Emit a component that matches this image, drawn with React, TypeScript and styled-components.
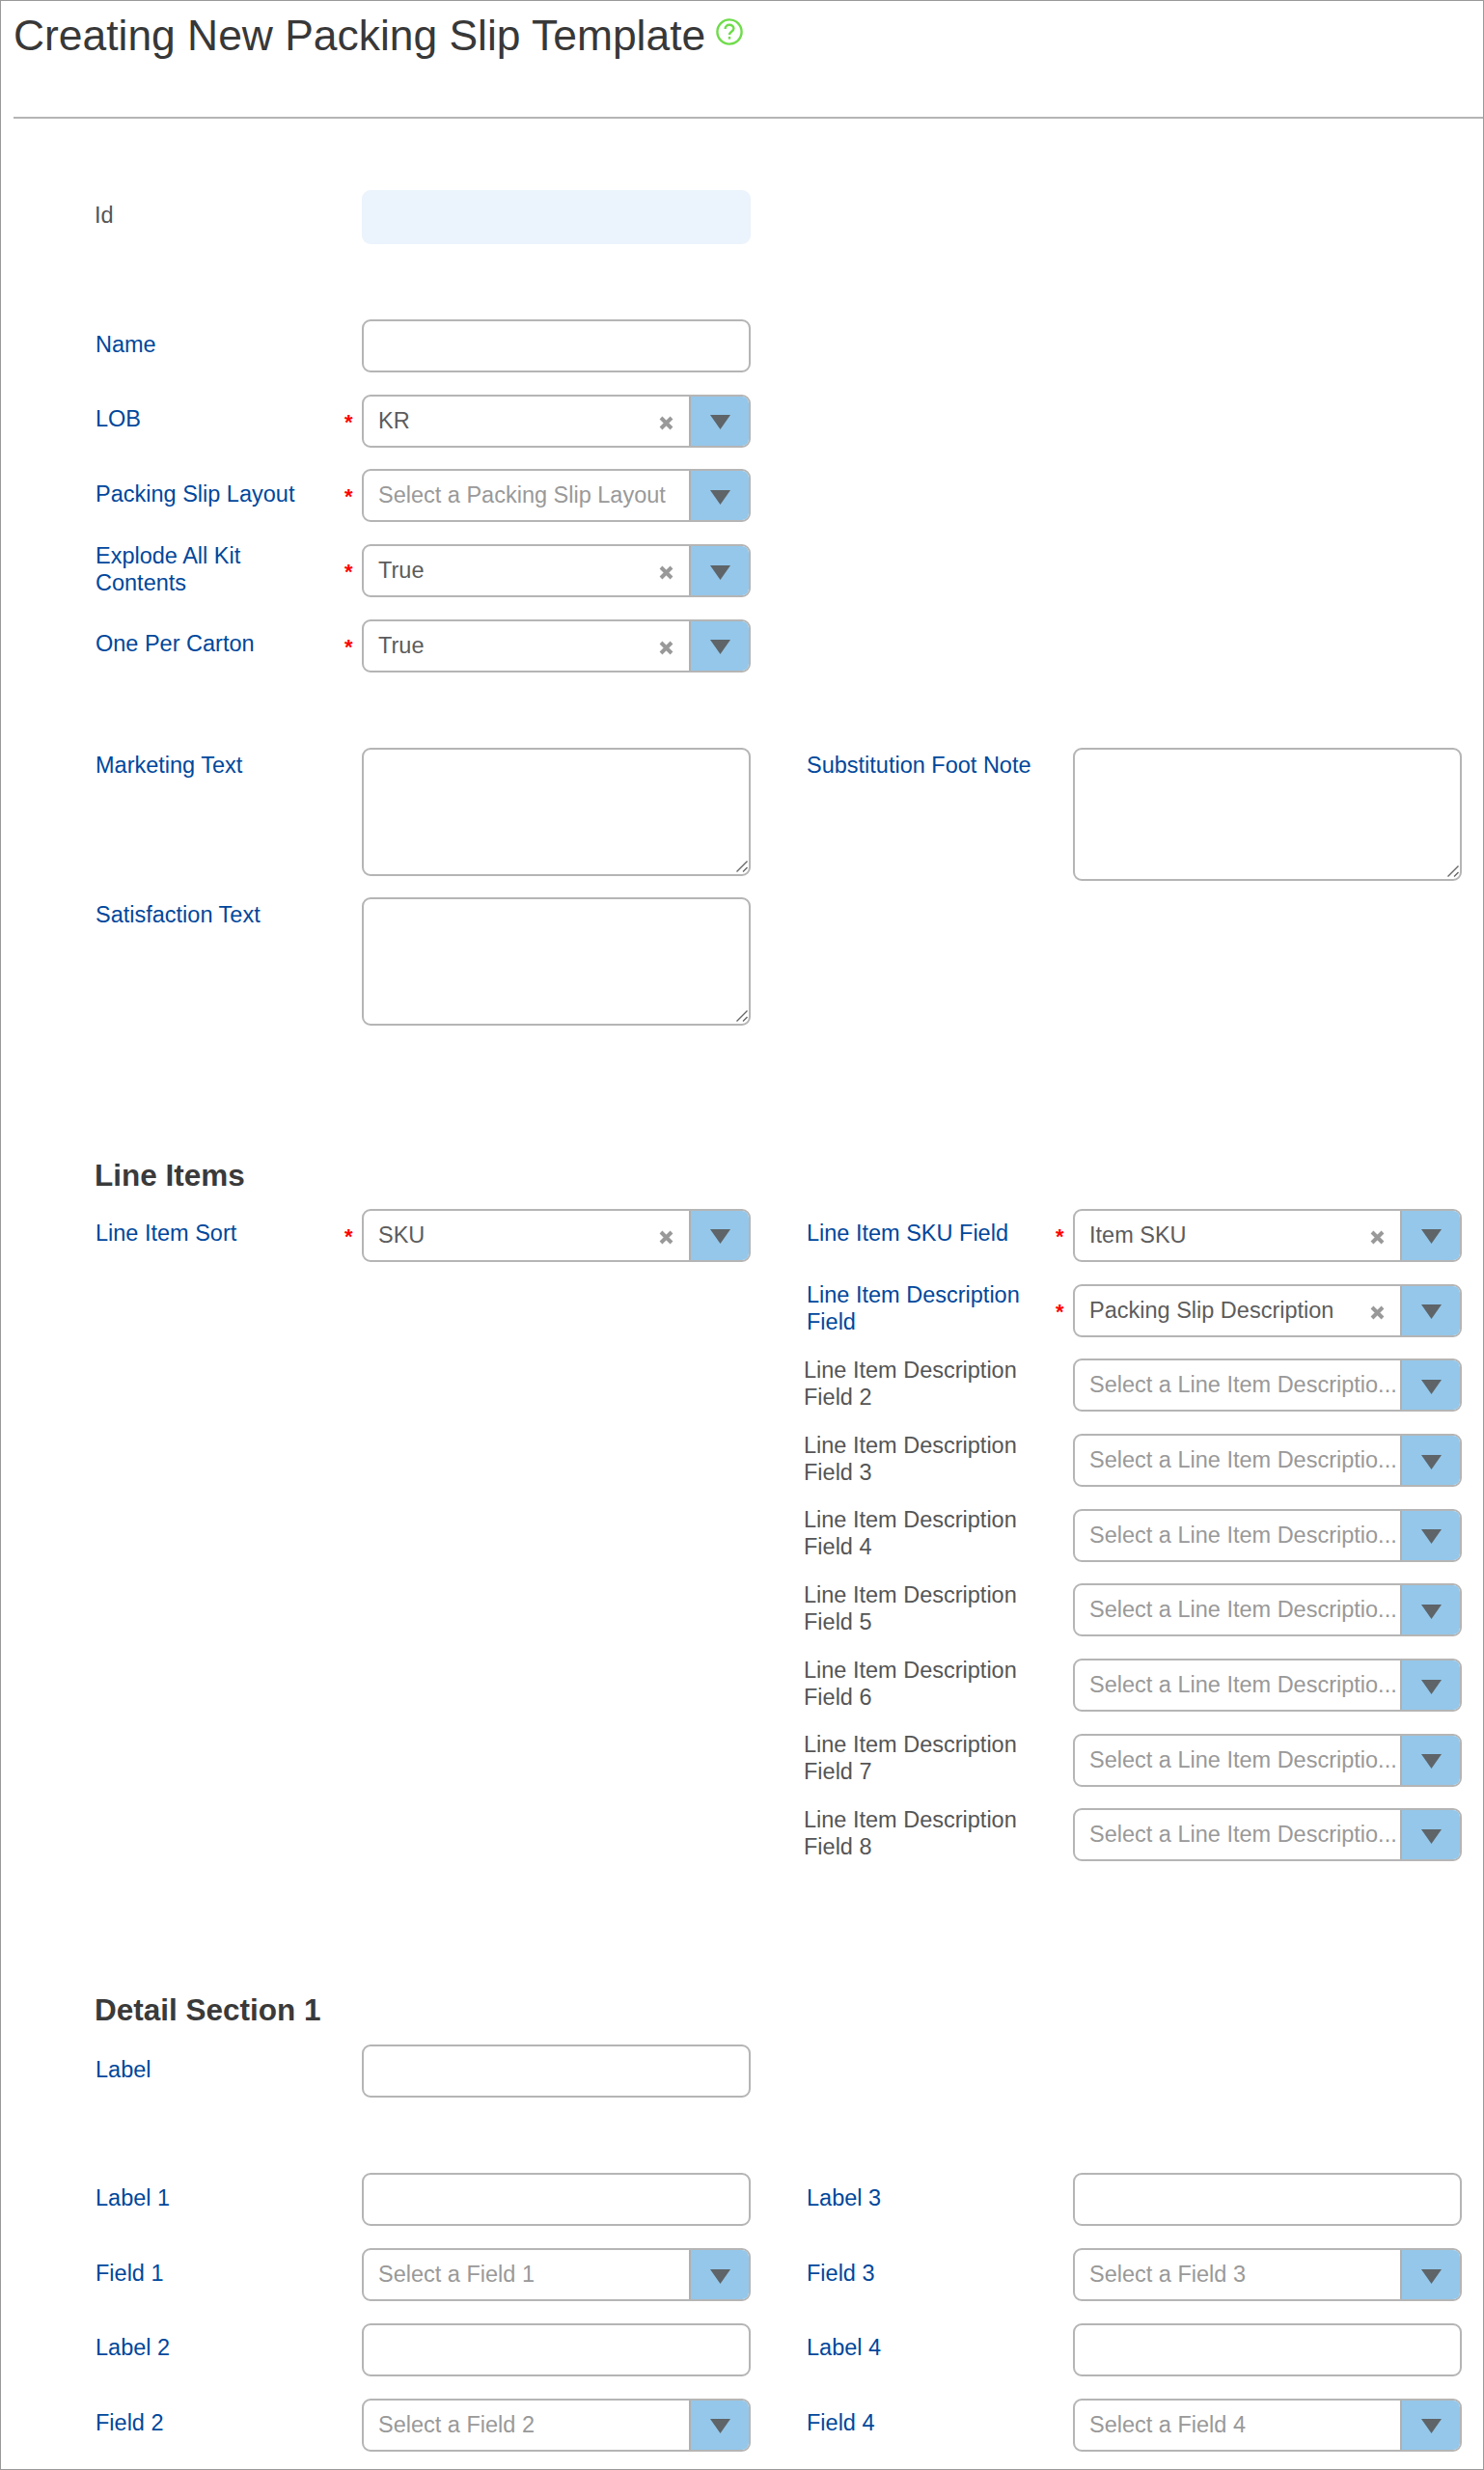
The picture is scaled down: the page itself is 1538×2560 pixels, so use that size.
import React from 'react'
import styled, { createGlobalStyle } from 'styled-components'

const GlobalStyle = createGlobalStyle`
  html, body {
    margin: 0;
    padding: 0;
    background: #fff;
  }
  * {
    box-sizing: border-box;
  }
`

const Page = styled.div`
  width: 1538px;
  height: 2560px;
  overflow: hidden;
  border: 1px solid #999;
  font-family: 'Liberation Sans', Arial, sans-serif;
  color: #555;
`

const Header = styled.div`
  margin-left: 13px;
  height: 120px;
  border-bottom: 2px solid #b5b5b5;
  box-sizing: content-box;
  display: flex;
  align-items: flex-start;
`

const Title = styled.h1`
  margin: 12px 0 0;
  font-size: 44.4px;
  line-height: 48px;
  font-weight: 400;
  color: #383838;
`

const HelpIcon = styled.svg`
  width: 28px;
  height: 28px;
  margin: 18px 0 0 11px;
`

const Form = styled.div`
  padding-left: 97px;
  width: 1514px;
`

const Columns = styled.div<{ $top: number }>`
  display: flex;
  gap: 57px;
  margin-top: ${({ $top }) => $top}px;
`

const Column = styled.div`
  width: 680px;
  display: flex;
  flex-direction: column;
  gap: 22.7px;
`

const Field = styled.div`
  display: grid;
  grid-template-columns: 277px 403px;
  position: relative;
`

const FieldLabel = styled.div<{ $muted?: boolean; $top?: boolean; $outdent?: boolean }>`
  width: 240px;
  font-size: 23.5px;
  line-height: 28px;
  padding-left: ${({ $muted }) => ($muted ? '0' : '1px')};
  margin-left: ${({ $outdent }) => ($outdent ? '-2px' : '0')};
  align-self: ${({ $top }) => ($top ? 'start' : 'center')};
  margin-top: ${({ $top }) => ($top ? '4px' : '-4px')};
  color: ${({ $muted }) => ($muted ? '#555' : '#00479b')};
`

const Required = styled.span`
  position: absolute;
  left: 259px;
  top: 15px;
  font-size: 22px;
  line-height: 28px;
  font-weight: 700;
  color: #f00;
`

const Input = styled.input<{ $readOnlyLook?: boolean }>`
  width: 403px;
  height: ${({ $readOnlyLook }) => ($readOnlyLook ? '56px' : '55px')};
  padding: 0 15px;
  font: inherit;
  border-radius: 9px;
  outline: none;
  background: ${({ $readOnlyLook }) => ($readOnlyLook ? '#ebf3fc' : '#fff')};
  border: ${({ $readOnlyLook }) => ($readOnlyLook ? '0' : '2px solid #b5b5b5')};
`

const TextAreaWrap = styled.div`
  position: relative;
  width: 403px;
`

const TextArea = styled.textarea<{ $height: number }>`
  display: block;
  width: 403px;
  height: ${({ $height }) => $height}px;
  border: 2px solid #b5b5b5;
  border-radius: 9px;
  outline: none;
  resize: none;
  background: #fff;
`

const ResizeGrip = styled.svg`
  position: absolute;
  right: 3px;
  bottom: 4px;
  width: 12px;
  height: 12px;
`

const SelectBox = styled.div`
  width: 403px;
  height: 55px;
  display: flex;
  border: 2px solid #b5b5b5;
  border-radius: 9px;
  overflow: hidden;
  background: #fff;
`

const SelectValue = styled.div<{ $placeholder: boolean }>`
  flex: 1;
  min-width: 0;
  padding-left: 15px;
  font-size: 23.5px;
  line-height: 50px;
  white-space: nowrap;
  overflow: hidden;
  color: ${({ $placeholder }) => ($placeholder ? '#999' : '#5c5c5c')};
`

const ClearIcon = styled.svg`
  flex: none;
  width: 15px;
  height: 15px;
  margin: 20px 16px 0 0;
`

const CaretButton = styled.div`
  flex: none;
  width: 62px;
  display: flex;
  align-items: center;
  justify-content: center;
  background: #94c7ea;
  border-left: 2px solid #b0b0b0;
`

const CaretIcon = styled.svg`
  width: 21px;
  height: 15px;
  margin-top: 3px;
`

const SectionTitle = styled.h2<{ $top: number }>`
  margin: ${({ $top }) => $top}px 0 0;
  font-size: 31.5px;
  line-height: 34px;
  font-weight: 700;
  color: #3a3a3a;
`

interface SelectProps {
  value?: string
  placeholder?: string
}

function Select({ value, placeholder }: SelectProps) {
  return (
    <SelectBox>
      <SelectValue $placeholder={!value}>{value || placeholder}</SelectValue>
      {value && (
        <ClearIcon viewBox="0 0 15 15">
          <path d="M2 2 L13 13 M13 2 L2 13" stroke="#999" strokeWidth="4" />
        </ClearIcon>
      )}
      <CaretButton>
        <CaretIcon viewBox="0 0 21 15">
          <path d="M0 0 H21 L10.5 15 Z" fill="#5e6468" />
        </CaretIcon>
      </CaretButton>
    </SelectBox>
  )
}

interface SelectFieldProps extends SelectProps {
  label: string
  required?: boolean
  muted?: boolean
}

function SelectField({ label, required, muted, value, placeholder }: SelectFieldProps) {
  return (
    <Field>
      <FieldLabel $muted={muted} $outdent={muted}>
        {label}
      </FieldLabel>
      {required && <Required>*</Required>}
      <Select value={value} placeholder={placeholder} />
    </Field>
  )
}

function InputField({ label }: { label: string }) {
  return (
    <Field>
      <FieldLabel>{label}</FieldLabel>
      <Input />
    </Field>
  )
}

function TextAreaField({ label, height }: { label: string; height: number }) {
  return (
    <Field>
      <FieldLabel $top>{label}</FieldLabel>
      <TextAreaWrap>
        <TextArea $height={height} />
        <ResizeGrip viewBox="0 0 12 12" stroke="#666" strokeWidth="1.4">
          <path d="M0.5 11.5 L11.5 0.5 M7 11.5 L11.5 7" />
        </ResizeGrip>
      </TextAreaWrap>
    </Field>
  )
}

const DESCRIPTION_FIELDS = [2, 3, 4, 5, 6, 7, 8]

export default function App() {
  return (
    <Page>
      <GlobalStyle />
      <Header>
        <Title>Creating New Packing Slip Template</Title>
        <HelpIcon viewBox="0 0 28 28" fill="none" stroke="#6edc4a" strokeWidth="2.4">
          <circle cx="14" cy="14" r="12.6" />
          <path d="M9.6 11 C9.6 8.2 11.6 6.8 14 6.8 C16.6 6.8 18.4 8.4 18.4 10.6 C18.4 13.6 14 14 14 17" />
          <path d="M14 19 V21.6" />
        </HelpIcon>
      </Header>

      <Form>
        <Columns $top={74}>
          <Column>
            <Field>
              <FieldLabel $muted>Id</FieldLabel>
              <Input $readOnlyLook />
            </Field>
          </Column>
        </Columns>

        <Columns $top={78}>
          <Column>
            <InputField label="Name" />
            <SelectField label="LOB" required value="KR" />
            <SelectField label="Packing Slip Layout" required placeholder="Select a Packing Slip Layout" />
            <SelectField label="Explode All Kit Contents" required value="True" />
            <SelectField label="One Per Carton" required value="True" />
          </Column>
        </Columns>

        <Columns $top={78}>
          <Column>
            <TextAreaField label="Marketing Text" height={133} />
            <TextAreaField label="Satisfaction Text" height={133} />
          </Column>
          <Column>
            <TextAreaField label="Substitution Foot Note" height={138} />
          </Column>
        </Columns>

        <SectionTitle $top={138}>Line Items</SectionTitle>
        <Columns $top={17.5}>
          <Column>
            <SelectField label="Line Item Sort" required value="SKU" />
          </Column>
          <Column>
            <SelectField label="Line Item SKU Field" required value="Item SKU" />
            <SelectField label="Line Item Description Field" required value="Packing Slip Description" />
            {DESCRIPTION_FIELDS.map((n) => (
              <SelectField
                key={n}
                muted
                label={`Line Item Description Field ${n}`}
                placeholder="Select a Line Item Descriptio..."
              />
            ))}
          </Column>
        </Columns>

        <SectionTitle $top={137}>Detail Section 1</SectionTitle>
        <Columns $top={19}>
          <Column>
            <InputField label="Label" />
          </Column>
        </Columns>

        <Columns $top={78}>
          <Column>
            <InputField label="Label 1" />
            <SelectField label="Field 1" placeholder="Select a Field 1" />
            <InputField label="Label 2" />
            <SelectField label="Field 2" placeholder="Select a Field 2" />
          </Column>
          <Column>
            <InputField label="Label 3" />
            <SelectField label="Field 3" placeholder="Select a Field 3" />
            <InputField label="Label 4" />
            <SelectField label="Field 4" placeholder="Select a Field 4" />
          </Column>
        </Columns>
      </Form>
    </Page>
  )
}
